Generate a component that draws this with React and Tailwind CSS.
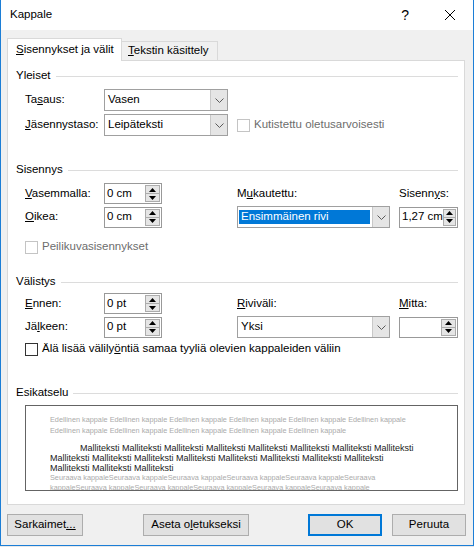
import React from "react";

function Chevron() {
  return (
    <svg width="9" height="5" viewBox="0 0 9 5">
      <path d="M0.5 0.5 L4.5 4.5 L8.5 0.5" fill="none" stroke="#5a5a5a" strokeWidth="1" />
    </svg>
  );
}

function Arrow({ up }) {
  return (
    <svg width="7" height="4" viewBox="0 0 7 4">
      {up ? <path d="M0 4 L3.5 0 L7 4 Z" fill="#000" /> : <path d="M0 0 L3.5 4 L7 0 Z" fill="#000" />}
    </svg>
  );
}

function Combo({ value, width, selected }) {
  return (
    <div className={`flex h-[22px] border border-[#a0a0a0] bg-white ${width}`}>
      <div className="flex-1 flex items-center pl-[3px]">
        {selected ? (
          <span className="-ml-[2px] flex h-[14px] w-[131px] items-center bg-[#0078d7] pl-[2px] text-white">
            {value}
          </span>
        ) : (
          value
        )}
      </div>
      <div className="flex w-[17px] items-center justify-center border-l border-[#c8c8c8] bg-[#e5e5e5]">
        <Chevron />
      </div>
    </div>
  );
}

function Spin({ value, width }) {
  return (
    <div className={`flex h-[21px] border border-[#999999] bg-white ${width}`}>
      <div className="flex-1 flex items-center pl-[2px] whitespace-nowrap">{value}</div>
      <div className="my-[1px] mr-[1px] flex w-[15px] flex-col">
        <div className="flex flex-1 items-center justify-center border border-[#acacac] bg-[#e5e5e5]">
          <Arrow up />
        </div>
        <div className="flex flex-1 items-center justify-center border border-t-0 border-[#acacac] bg-[#e5e5e5]">
          <Arrow />
        </div>
      </div>
    </div>
  );
}

function Check({ disabled }) {
  return (
    <span
      className={`inline-block h-[13px] w-[13px] shrink-0 border bg-white ${
        disabled ? "border-[#c4c4c4]" : "border-[#333333]"
      }`}
    />
  );
}

function Group({ title, className }) {
  return (
    <div className={`flex h-[16px] items-center pl-[8px] pr-[6px] ${className}`}>
      <span>{title}</span>
      <div className="ml-[5px] h-px flex-1 bg-[#dcdcdc]" />
    </div>
  );
}

function Btn({ children, className }) {
  return (
    <button className={`flex h-[22px] items-center justify-center bg-[#e1e1e1] ${className}`}>
      {children}
    </button>
  );
}

const ed = (n) => Array(n).fill("Edellinen kappale").join(" ");
const mal = (n) => Array(n).fill("Malliteksti").join(" ");

export default function App() {
  return (
    <div className="h-[547px] w-[474px] bg-[#e9e9e9] font-['Liberation_Sans',Arial,sans-serif] text-[11.5px] text-black">
      <div className="flex h-[546px] w-[474px] flex-col border-x border-b border-[#1c7ed6] bg-[#f0f0f0]">
        {/* title bar */}
        <div className="flex h-[30px] items-center bg-white pl-[9px]">
          <span>Kappale</span>
          <div className="ml-auto flex items-center pr-[18px]">
            <span className="text-[14px] leading-none">?</span>
            <svg className="ml-[36px]" width="10" height="10" viewBox="0 0 10 10">
              <path d="M0 0 L10 10 M10 0 L0 10" stroke="#000" strokeWidth="1" />
            </svg>
          </div>
        </div>

        {/* tabs */}
        <div className="mt-[8px] flex items-end pl-[6px]">
          <div className="relative z-10 -mb-px flex h-[23px] w-[115px] items-center border border-b-0 border-[#d9d9d9] bg-white pl-[8px]">
            <span>
              <u>S</u>isennykset ja välit
            </span>
          </div>
          <div className="flex h-[19px] w-[96px] items-center border border-l-0 border-b-0 border-[#d9d9d9] bg-[#f0f0f0] pl-[6px]">
            <span>
              <u>T</u>ekstin käsittely
            </span>
          </div>
        </div>

        {/* panel */}
        <div className="ml-[6px] flex h-[445px] w-[458px] flex-col border border-[#d9d9d9] bg-white">
          <Group title="Yleiset" className="mt-[7px]" />
          <div className="mt-[5px] grid h-[22px] grid-cols-[79px_133px_162px_59px] items-center pl-[17px]">
            <span>
              Ta<u>s</u>aus:
            </span>
            <Combo value="Vasen" width="w-[124px]" />
          </div>
          <div className="mt-[3px] grid h-[22px] grid-cols-[79px_133px_162px_59px] items-center pl-[17px]">
            <span>
              <u>J</u>äsennystaso:
            </span>
            <Combo value="Leipäteksti" width="w-[124px]" />
            <div className="col-span-2 flex items-center">
              <Check disabled />
              <span className="ml-[4px] text-[#6d6d6d]">Kutistettu oletusarvoisesti</span>
            </div>
          </div>

          <Group title="Sisennys" className="mt-[26px]" />
          <div className="mt-[5px] grid h-[21px] grid-cols-[79px_133px_162px_59px] items-center pl-[17px]">
            <span>
              <u>V</u>asemmalla:
            </span>
            <Spin value="0 cm" width="w-[58px]" />
            <span>
              M<u>u</u>kautettu:
            </span>
            <span>
              Sisenn<u>y</u>s:
            </span>
          </div>
          <div className="mt-[2px] grid h-[22px] grid-cols-[79px_133px_162px_59px] items-center pl-[17px]">
            <span>
              <u>O</u>ikea:
            </span>
            <Spin value="0 cm" width="w-[58px]" />
            <Combo value="Ensimmäinen rivi" width="w-[153px]" selected />
            <Spin value="1,27 cm" width="w-[59px]" />
          </div>
          <div className="mt-[12px] flex h-[14px] items-center pl-[17px]">
            <Check disabled />
            <span className="ml-[4px] text-[#6d6d6d]">Peilikuvasisennykset</span>
          </div>

          <Group title="Välistys" className="mt-[20px]" />
          <div className="mt-[3px] grid h-[21px] grid-cols-[79px_133px_162px_59px] items-center pl-[17px]">
            <span>
              <u>E</u>nnen:
            </span>
            <Spin value="0 pt" width="w-[58px]" />
            <span>
              <u>R</u>iviväli:
            </span>
            <span>
              <u>M</u>itta:
            </span>
          </div>
          <div className="mt-[2px] grid h-[22px] grid-cols-[79px_133px_162px_59px] items-center pl-[17px]">
            <span>
              Jä<u>l</u>keen:
            </span>
            <Spin value="0 pt" width="w-[58px]" />
            <Combo value="Yksi" width="w-[153px]" />
            <Spin value="" width="w-[59px]" />
          </div>
          <div className="mt-[4px] flex h-[14px] items-center pl-[17px]">
            <Check />
            <span className="ml-[4px]">
              Älä lisää välily<u>ö</u>ntiä samaa tyyliä olevien kappaleiden väliin
            </span>
          </div>

          <Group title="Esikatselu" className="mt-[29px]" />
          <div className="ml-[17px] mt-[4px] h-[86px] w-[433px] overflow-hidden border border-[#646464] bg-white pl-[24px] pt-[8px] whitespace-nowrap">
            <div className="text-[7.3px] leading-[11px] text-[#ababab]">
              <div>{ed(6)}</div>
              <div>{ed(5)}</div>
            </div>
            <div className="mt-[7px] text-[9px] leading-[10px] text-[#1a1a1a]">
              <div className="pl-[30px]">{mal(8)}</div>
              <div>{mal(8)}</div>
              <div>{mal(3)}</div>
            </div>
            <div className="text-[7.3px] leading-[10px] text-[#ababab]">
              <div>{"Seuraava kappale".repeat(5) + "Seuraava"}</div>
              <div>{"kappale" + "Seuraava kappale".repeat(5)}</div>
            </div>
          </div>
        </div>

        {/* buttons */}
        <div className="mt-[9px] flex pl-[6px]">
          <Btn className="w-[76px] border border-[#adadad]">
            <span>
              Sarkaimet<u>...</u>
            </span>
          </Btn>
          <Btn className="ml-[60px] w-[106px] border border-[#adadad]">
            <span>
              Aseta o<u>l</u>etukseksi
            </span>
          </Btn>
          <Btn className="ml-[59px] w-[74px] border-2 border-[#0078d7]">OK</Btn>
          <Btn className="ml-[10px] w-[74px] border border-[#adadad]">Peruuta</Btn>
        </div>
      </div>
    </div>
  );
}
